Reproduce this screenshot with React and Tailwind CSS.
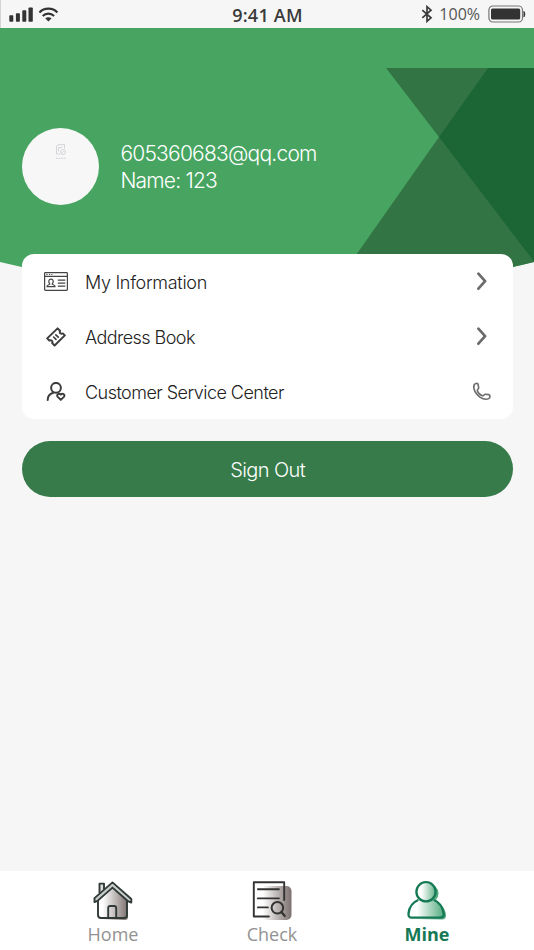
import React from 'react'

const StatusBar = () => (
  <div className="flex h-7 items-center justify-between border-l border-[#d4d4d4] bg-[#f6f6f6] pl-2 pr-2 font-['Open_Sans',sans-serif] text-[#3a3a3a]">
    <svg className="h-7 w-[170px]" viewBox="0 0 170 28" fill="#333">
      <rect x="0.3" y="15.3" width="4" height="6.4" rx="0.8" />
      <rect x="6.9" y="13.2" width="4" height="8.5" rx="0.8" />
      <rect x="13.3" y="10.3" width="4" height="11.4" rx="0.8" />
      <rect x="19.5" y="7.4" width="4.3" height="14.3" rx="0.8" />
      <g fill="none" stroke="#333" strokeWidth="2.1">
        <path d="M30.4 12.4C35.2 7.4 43.6 7.4 48.4 12.4" />
        <path d="M33.7 16C36.9 12.9 41.9 12.9 45.1 16" />
      </g>
      <path d="M36.2 18.3Q39.4 16.2 42.6 18.3L39.4 21.4Z" />
    </svg>
    <span className="w-[90px] whitespace-nowrap pt-0.5 text-center text-[18px] font-semibold tracking-[0.25px]">9:41 AM</span>
    <div className="flex w-[170px] items-center justify-end">
      <svg className="mr-1.5 h-[18px] w-3" viewBox="0 0 12 18" fill="none" stroke="#3a3a3a" strokeWidth="1.7">
        <path d="M1.3 5.2L10 12.8L6 16.3V1.7L10 5.2L1.3 12.8" />
      </svg>
      <span className="mr-2 text-[16px] leading-5 text-[#555]">100%</span>
      <svg className="h-[18px] w-[38px]" viewBox="0 0 38 18">
        <rect x="0.9" y="1" width="33.6" height="16" rx="4" fill="none" stroke="#777" strokeWidth="1.2" />
        <rect x="3" y="3.5" width="29.2" height="11" rx="1.5" fill="#333" />
        <path d="M36 6.5Q37.8 9 36 11.8Z" fill="#333" stroke="#333" />
      </svg>
    </div>
  </div>
)

const HeaderArt = () => (
  <svg className="absolute inset-0 h-[260px] w-[534px]" viewBox="0 28 534 260">
    <defs>
      <clipPath id="curve">
        <path d="M0 28H534V262Q400 295 267 295Q134 295 0 262Z" />
      </clipPath>
    </defs>
    <g clipPath="url(#curve)">
      <rect y="28" width="534" height="270" fill="#47a561" />
      <path d="M386 68H534V290H331.5L439 137Z" fill="#337444" />
      <path d="M488 68H534V261.5L439 137Z" fill="#1c6635" />
    </g>
  </svg>
)

const CardIcon = () => (
  <svg className="h-5 w-6" viewBox="0 0 24 20" fill="none" stroke="#444" strokeWidth="1.2">
    <rect x="0.6" y="0.6" width="22.8" height="17.8" rx="0.8" />
    <path d="M0.6 4.3H23.4M2.4 2.5H3.6M5 2.5H6.2M7.4 2.5H8.4" />
    <path d="M13.8 8.1H21.3M13.8 11.1H21.3M13.8 14.1H21.3" />
    <path d="M5.8 11.9C4 10.1 4.6 7.1 7 7.1S10 10.1 8.2 11.9C8.2 12.9 11 12.7 11 14.6H3C3 12.7 5.8 12.9 5.8 11.9Z" />
  </svg>
)

const TicketIcon = () => (
  <svg className="h-5 w-5" viewBox="0 0 20 20" fill="none" stroke="#3d3d3d" strokeWidth="2" strokeLinejoin="round" strokeLinecap="round">
    <path d="M11.6 1.4L14 3.7C13.3 6 14.6 7.2 16.8 6.4L18.8 8.4L8.6 18.5L6.2 16.1C7 13.9 5.4 12.7 3.3 13.5L1.2 11.4Z" />
    <path d="M9.8 7.8L12.3 10.2M7.6 10L10 12.4" strokeWidth="1.6" />
  </svg>
)

const UserHeartIcon = () => (
  <svg className="h-5 w-5" viewBox="0 0 20 20" fill="none" stroke="#3d3d3d" strokeWidth="2" strokeLinecap="round" strokeLinejoin="round">
    <circle cx="10" cy="5.8" r="4.9" />
    <path d="M1.7 17.9C1.7 14.3 3.8 11.7 7.2 10.7" />
    <path d="M14.8 17.9L11.5 14.6C10.2 12.4 13.2 10.7 14.8 12.6C16.4 10.7 19.4 12.4 18.1 14.6Z" />
  </svg>
)

const Chevron = () => (
  <svg className="mr-1 h-5 w-3" viewBox="0 0 12 20" fill="none" stroke="#6b6b6b" strokeWidth="2.7" strokeLinecap="round" strokeLinejoin="round">
    <path d="M2.4 1.7L9.1 9.2L2.4 16.7" />
  </svg>
)

const PhoneIcon = () => (
  <svg className="h-5 w-5" viewBox="0 0 20 20" fill="none" stroke="#6b6b6b" strokeWidth="1.6" strokeLinejoin="round">
    <path d="M2.1 2.9C3 1.3 5.7 .8 6.1 2.3L6.7 5.8C6.8 7.1 5 7.6 5.3 8.7C6.1 10.8 8.2 13 10.4 13.7C11.5 14 12.3 12.2 13.5 12.3L16.8 12.6C18.6 13 18.2 15.7 16.7 16.6C14.5 17.8 10.7 16.9 7.9 15.1C4.2 12.6 .6 6.9 2.1 2.9Z" />
  </svg>
)

const HomeIcon = () => (
  <svg className="h-10 w-10" viewBox="0 0 40 40" stroke="#303b38" strokeWidth="1.9" strokeLinejoin="round" strokeLinecap="round">
    <defs>
      <linearGradient id="grey">
        <stop offset="0.1" stopColor="#fff" />
        <stop offset="1" stopColor="#7b706e" />
      </linearGradient>
    </defs>
    <path d="M7 17L20 5L35 18V36Q35 39 32 39H10Q7 39 7 36Z" fill="url(#grey)" stroke="none" />
    <path d="M5 20V34Q5 37 8 37H31Q34 37 34 34V20" fill="none" />
    <path d="M6.5 11.5V2.6H11V8" fill="#ddd" />
    <path d="M1.5 17.1L19.5 1.4L38.3 18V21.6L34.5 19.8L19.5 6.6L4.5 19.9L1.5 21.1Z" fill="#c9cdcb" />
    <path d="M15.2 37V27Q15.2 25 17.2 25H21.2Q23.2 25 23.2 27V37" fill="none" />
  </svg>
)

const CheckIcon = () => (
  <svg className="h-10 w-10" viewBox="0 0 40 40" fill="none" stroke="#333" strokeWidth="1.9" strokeLinecap="round" strokeLinejoin="round">
    <rect x="7.5" y="5" width="32" height="34" rx="5" fill="url(#grey)" stroke="none" />
    <path d="M16.9 35.5H1.8V1.2H32.2V19" />
    <path d="M5.9 8.3H26.9M5.9 17.4H26.9M5.9 26.4H15.9" />
    <circle cx="25.4" cy="26.8" r="5.8" strokeWidth="2" />
    <path d="M29.4 31L32.8 35" strokeWidth="2.2" />
  </svg>
)

const MineIcon = () => (
  <svg className="h-10 w-10" viewBox="0 0 40 40" stroke="#147954" strokeWidth="2.3" strokeLinejoin="round">
    <defs>
      <linearGradient id="green">
        <stop offset="0.15" stopColor="#fff" />
        <stop offset="1" stopColor="#45a474" />
      </linearGradient>
    </defs>
    <circle cx="21.5" cy="12.5" r="10" fill="url(#green)" stroke="none" />
    <path d="M5 38.5Q4 20 21 20Q37 20 39 34Q39 38.5 35 38.5Z" fill="url(#green)" stroke="none" />
    <path d="M11.3 19C5.5 21.3 2.2 26.3 1.5 32.5Q1.2 36.7 4.7 36.7H32.8Q37.2 36.7 36.7 32.5C35.8 26.3 32.6 21.3 26.8 19" fill="none" />
    <circle cx="19" cy="10.8" r="9.6" fill="none" />
  </svg>
)

const menu = [
  { label: 'My Information', icon: <CardIcon />, action: <Chevron />, text: 'tracking-[-0.3px]' },
  { label: 'Address Book', icon: <TicketIcon />, action: <Chevron />, text: 'tracking-[-0.55px]' },
  { label: 'Customer Service Center', icon: <UserHeartIcon />, action: <PhoneIcon />, text: 'tracking-[-0.53px]' },
]

const tabs = [
  { label: 'Home', icon: <HomeIcon />, color: 'text-[#929292]', column: 'w-[80px]' },
  { label: 'Check', icon: <CheckIcon />, color: 'text-[#929292]', column: 'ml-[79px] w-[80px]' },
  { label: 'Mine', icon: <MineIcon />, color: 'font-bold text-[#147954]', column: 'ml-[75px] w-[80px]' },
]

export default function App() {
  return (
    <div className="flex h-[950px] w-[534px] flex-col overflow-hidden bg-[#f6f6f6] font-['Inter',sans-serif]">
      <StatusBar />
      <main className="relative flex-1">
        <HeaderArt />
        <div className="relative pl-[22.4px] pr-[21px]">
          <section className="flex h-[226px] items-start pt-[100px] text-white">
            <div className="flex h-[77px] w-[77px] flex-col items-center rounded-full bg-[#f7f7f7] pt-4">
              <svg className="h-4 w-3" viewBox="0 0 12 16" fill="none" stroke="#cfd0d5" strokeWidth="0.9">
                <path d="M5 10H1.5V2.2L3 .7H9.5V4.5M3.5 7.5V3.5H7" />
                <circle cx="8" cy="8" r="2.5" />
                <path d="M6.3 9.7L9.7 6.3M1 14.3H11" strokeDasharray="2 0.6" />
              </svg>
            </div>
            <div className="ml-[21px] pt-3 text-[21px] font-light leading-[27px]">
              <p className="tracking-[-0.78px]">605360683@qq.com</p>
              <p className="tracking-[-0.78px]">Name: 123</p>
            </div>
          </section>
          <section className="h-[165px] rounded-xl bg-white pl-[21.6px] pr-[21px]">
            {menu.map((item) => (
              <div key={item.label} className="flex h-[55px] items-center">
                <span className="flex w-[25px] justify-center">{item.icon}</span>
                <span className={`ml-4 flex-1 pt-0.5 text-[18px] font-light text-[#222] ${item.text}`}>{item.label}</span>
                {item.action}
              </div>
            ))}
          </section>
          <button className="mt-[22px] block h-14 w-full rounded-full bg-[#367b49] pt-0.5 text-[20px] font-light tracking-[-0.6px] text-white">
            Sign Out
          </button>
        </div>
      </main>
      <nav className="flex h-[79px] bg-white pl-[73px] font-['Open_Sans',sans-serif]">
        {tabs.map((tab) => (
          <div key={tab.label} className={`flex flex-col items-center pt-2.5 ${tab.column}`}>
            {tab.icon}
            <span className={`text-[18px] leading-[26px] ${tab.color}`}>{tab.label}</span>
          </div>
        ))}
      </nav>
    </div>
  )
}
